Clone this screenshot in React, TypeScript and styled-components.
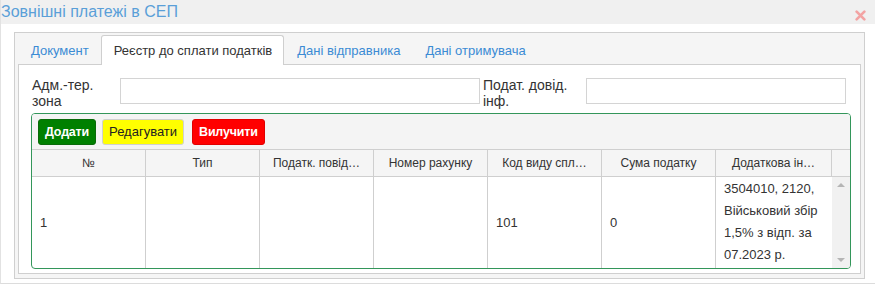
import styled, { createGlobalStyle } from 'styled-components';

const GlobalStyle = createGlobalStyle`
  html, body {
    margin: 0;
    padding: 0;
    background: #ffffff;
  }
  body {
    font-family: "Liberation Sans", Arial, sans-serif;
    color: #333;
  }
`;

const Modal = styled.div`
  width: 875px;
  height: 284px;
  box-sizing: border-box;
  border-left: 1px solid #e2e2e2;
  border-bottom: 1px solid #dcdcdc;
  display: flex;
  flex-direction: column;
`;

const Header = styled.div`
  height: 24px;
  background: #f0f0f0;
  display: flex;
  align-items: center;
  justify-content: space-between;
  padding-right: 9px;
`;

const Title = styled.div`
  font-size: 16px;
  color: #5a9fd8;
  line-height: 24px;
`;

const CloseIcon = styled.svg`
  width: 11px;
  height: 11px;
  margin-top: 7px;
`;

const Body = styled.div`
  flex: 1;
  padding: 8px 10px 5px 13px;
  display: flex;
`;

const TabBox = styled.div`
  flex: 1;
  border: 1px solid #cfcfcf;
  background: #f5f5f5;
  padding: 2px 3px 4px 3px;
  display: flex;
  flex-direction: column;
`;

const TabList = styled.div`
  display: flex;
  height: 29px;
  align-items: stretch;
`;

const Tab = styled.div<{ $active?: boolean }>`
  padding: 0 11px 0 12px;
  font-size: 13px;
  display: flex;
  align-items: center;
  color: ${p => (p.$active ? '#333' : '#3b8bd4')};
  background: ${p => (p.$active ? '#fff' : 'transparent')};
  border: 1px solid ${p => (p.$active ? '#cfcfcf' : 'transparent')};
  border-bottom: none;
  border-radius: 3px 3px 0 0;
  margin-bottom: -1px;
  position: relative;
  z-index: 1;
`;

const Panel = styled.div`
  flex: 1;
  border: 1px solid #cfcfcf;
  background: #fff;
  padding: 12px 9px 4px 12px;
`;

const FormRow = styled.div`
  display: flex;
  align-items: flex-start;
  height: 36px;
`;

const Label = styled.div<{ $width: number; $indent?: number }>`
  width: ${p => p.$width}px;
  font-size: 14px;
  line-height: 16px;
  color: #333;
  padding-left: ${p => p.$indent ?? 1}px;
  box-sizing: border-box;
`;

const Input = styled.div<{ $width: number }>`
  width: ${p => p.$width}px;
  height: 26px;
  margin-top: 1px;
  box-sizing: border-box;
  border: 1px solid #d4d4d4;
  background: #fff;
`;

const Grid = styled.div`
  border: 1px solid #33965a;
  border-radius: 4px;
  overflow: hidden;
`;

const Toolbar = styled.div`
  height: 35px;
  background: #f4f4f4;
  display: flex;
  align-items: center;
  padding: 0 6px;
  box-sizing: border-box;
`;

const ActionButton = styled.div<{ $bg: string; $fg: string; $bold?: boolean; $border: string; $gap: number }>`
  height: 26px;
  box-sizing: border-box;
  padding: 0 6px;
  margin-right: ${p => p.$gap}px;
  display: flex;
  align-items: center;
  font-size: ${p => (p.$bold ? '12.5px' : '13px')};
  font-weight: ${p => (p.$bold ? 'bold' : 'normal')};
  letter-spacing: ${p => (p.$bold ? '-0.2px' : '0')};
  color: ${p => p.$fg};
  background: ${p => p.$bg};
  border: 1px solid ${p => p.$border};
  border-radius: 3px;
`;

const columns = '114px 114px 114px 114px 114px 114px 116px 1fr';

const HeadRow = styled.div`
  display: grid;
  grid-template-columns: ${columns};
  height: 27px;
  border-top: 1px solid #cfcfcf;
  background: #f5f5f5;
`;

const HeadCell = styled.div`
  border-right: 1px solid #cfcfcf;
  border-bottom: 1px solid #cfcfcf;
  display: flex;
  align-items: center;
  justify-content: center;
  font-size: 12px;
  color: #333;
  white-space: nowrap;
  overflow: hidden;
  &:last-child {
    border-right: none;
  }
`;

const BodyRow = styled.div`
  display: grid;
  grid-template-columns: ${columns};
  height: 91px;
`;

const Cell = styled.div`
  border-right: 1px solid #cfcfcf;
  display: flex;
  align-items: center;
  padding: 0 8px;
  font-size: 13px;
  color: #333;
`;

const InfoCell = styled.div`
  padding: 1px 6px 1px 8px;
  font-size: 13px;
  line-height: 22px;
  color: #333;
`;

const Scrollbar = styled.div`
  background: #f1f1f1;
  display: flex;
  flex-direction: column;
  justify-content: space-between;
  align-items: center;
  padding: 6px 0 6px;
`;

const Arrow = styled.div<{ $up?: boolean }>`
  width: 0;
  height: 0;
  border-left: 4px solid transparent;
  border-right: 4px solid transparent;
  ${p => (p.$up ? 'border-bottom: 4px solid #b5b5b5;' : 'border-top: 4px solid #b5b5b5;')}
`;

const heads = ['№', 'Тип', 'Податк. повід…', 'Номер рахунку', 'Код виду спл…', 'Сума податку', 'Додаткова ін…', ''];

const App = () => (
  <>
    <GlobalStyle />
    <Modal>
      <Header>
        <Title>Зовнішні платежі в СЕП</Title>
        <CloseIcon viewBox="0 0 10 10">
          <path d="M1.5 1.5 L8.5 8.5 M8.5 1.5 L1.5 8.5" stroke="#f3a3a3" strokeWidth="2.4" strokeLinecap="round" />
        </CloseIcon>
      </Header>
      <Body>
        <TabBox>
          <TabList>
            <Tab>Документ</Tab>
            <Tab $active>Реєстр до сплати податків</Tab>
            <Tab>Дані відправника</Tab>
            <Tab>Дані отримувача</Tab>
          </TabList>
          <Panel>
            <FormRow>
              <Label $width={89}>Адм.-тер. зона</Label>
              <Input $width={360} />
              <Label $width={106} $indent={3}>Подат. довід. інф.</Label>
              <Input $width={260} />
            </FormRow>
            <Grid>
              <Toolbar>
                <ActionButton $bg="#008000" $fg="#fff" $border="#0a6a0a" $gap={6} $bold>Додати</ActionButton>
                <ActionButton $bg="#ffff00" $fg="#222" $border="#d0d0d0" $gap={8}>Редагувати</ActionButton>
                <ActionButton $bg="#ff0000" $fg="#fff" $border="#e00000" $gap={0} $bold>Вилучити</ActionButton>
              </Toolbar>
              <HeadRow>
                {heads.map((h, i) => (
                  <HeadCell key={i}>{h}</HeadCell>
                ))}
              </HeadRow>
              <BodyRow>
                <Cell>1</Cell>
                <Cell />
                <Cell />
                <Cell />
                <Cell>101</Cell>
                <Cell>0</Cell>
                <InfoCell>
                  3504010, 2120,
                  <br />
                  Військовий збір
                  <br />
                  1,5% з відп. за
                  <br />
                  07.2023 р.
                </InfoCell>
                <Scrollbar>
                  <Arrow $up />
                  <Arrow />
                </Scrollbar>
              </BodyRow>
            </Grid>
          </Panel>
        </TabBox>
      </Body>
    </Modal>
  </>
);

export default App;
